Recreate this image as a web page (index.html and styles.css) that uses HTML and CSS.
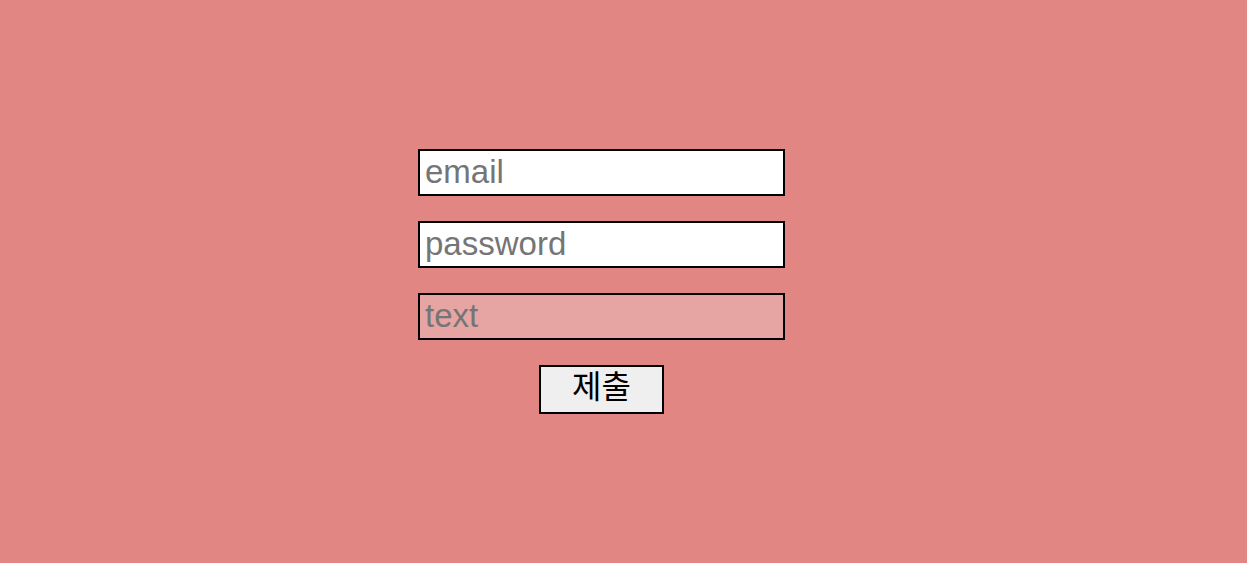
FILE: index.html
```html
<!DOCTYPE html>
<html lang="ko">
<head>
<meta charset="utf-8">
<title>Form</title>
<link rel="stylesheet" href="styles.css">
</head>
<body>
<form class="form">
<input class="field" type="email" placeholder="email" aria-label="email">
<input class="field" type="password" placeholder="password" aria-label="password">
<input class="field field-muted" type="text" placeholder="text" aria-label="text">
<button class="submit" type="submit">제출</button>
</form>
</body>
</html>
```
FILE: styles.css
```css
* {
  box-sizing: border-box;
}

body {
  margin: 0;
  min-height: 100vh;
  padding-right: 44px;
  display: flex;
  align-items: center;
  justify-content: center;
  background: #e18683;
  font-family: "Liberation Sans", "Noto Sans CJK KR", sans-serif;
}

.form {
  display: flex;
  flex-direction: column;
  align-items: center;
  gap: 25px;
}

.field {
  width: 367px;
  height: 47px;
  margin: 0;
  padding: 2px 5px 4px;
  border: 2px solid #000;
  border-radius: 0;
  background: #fff;
  font: inherit;
  font-size: 33px;
}

.field::placeholder {
  color: #757575;
  opacity: 1;
}

.field-muted {
  background: #e6a5a3;
}

.submit {
  height: 49px;
  margin: 0;
  padding: 0 31px 6px;
  border: 2px solid #000;
  border-radius: 0;
  background: #efefef;
  color: #000;
  font: inherit;
  font-size: 32px;
  line-height: 40px;
}
```
